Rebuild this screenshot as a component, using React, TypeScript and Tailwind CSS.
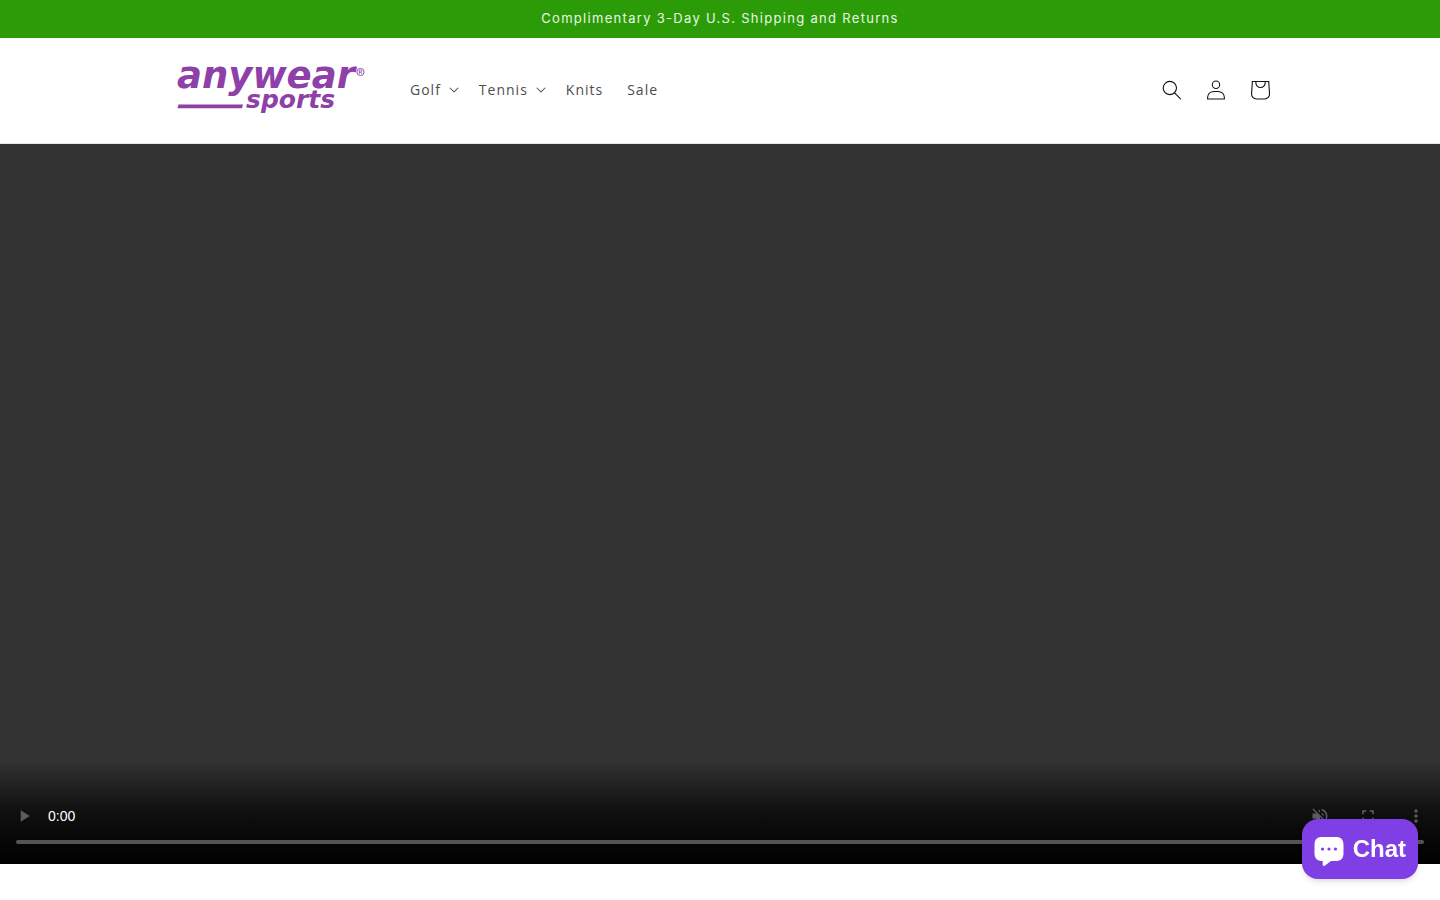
import React from 'react';

const CaretIcon = () => (
  <svg viewBox="0 0 10 6" fill="currentColor" className="w-2.5 h-1.5" aria-hidden="true">
    <path d="M9.354.646a.5.5 0 00-.708 0L5 4.293 1.354.646a.5.5 0 00-.708.708l4 4a.5.5 0 00.708 0l4-4a.5.5 0 000-.708z" />
  </svg>
);

const Logo = () => (
  <svg viewBox="0 -4 204 73" className="w-[204px] h-[73px]" fill="#8e3fa8" fontFamily="'DejaVu Sans', sans-serif" fontWeight="700" fontStyle="italic">
    <text>
      <tspan x="7" y="31" fontSize="37">anywear</tspan>
      <tspan x="76" y="51" fontSize="25">sports</tspan>
    </text>
    <path d="M8.500 47.500h64.500l-1 3.700H7.500z" />
    <circle cx="190.500" cy="15" r="3.600" fill="none" stroke="#8e3fa8" strokeWidth="0.900" />
    <path d="M189.300 17v-4h1.400a1.100 1.100 0 010 2.200h-1.400m1.400 0l1.200 1.800" fill="none" stroke="#8e3fa8" strokeWidth="0.800" />
  </svg>
);

const navItems = [
  { name: 'Golf', hasMenu: true },
  { name: 'Tennis', hasMenu: true },
  { name: 'Knits', hasMenu: false },
  { name: 'Sale', hasMenu: false },
];

const headerActions = [
  {
    name: 'Search',
    viewBox: '0 0 18 19',
    size: 'w-5 h-5',
    path: 'M11.03 11.68A5.784 5.784 0 112.85 3.5a5.784 5.784 0 018.18 8.18zm.26 1.12a6.78 6.78 0 11.72-.7l5.4 5.4a.5.5 0 11-.71.7l-5.41-5.4z',
  },
  {
    name: 'Log in',
    viewBox: '0 0 18 19',
    size: 'w-5 h-5',
    path: 'M6 4.5a3 3 0 116 0 3 3 0 01-6 0zm3-4a4 4 0 100 8 4 4 0 000-8zm5.58 12.15c1.12.82 1.83 2.24 1.91 4.85H1.51c.08-2.6.79-4.03 1.9-4.85C4.66 11.75 6.5 11.5 9 11.5s4.35.26 5.58 1.15zM9 10.5c-2.5 0-4.65.24-6.17 1.35C1.27 12.98.5 14.93.5 18v.5h17V18c0-3.07-.77-5.02-2.33-6.15-1.52-1.1-3.67-1.35-6.17-1.35z',
  },
  {
    name: 'Cart',
    viewBox: '0 0 40 40',
    size: 'w-11 h-11',
    path: 'M15.75 11.8h-3.16l-.77 11.6a5 5 0 0 0 4.99 5.34h7.38a5 5 0 0 0 4.99-5.33L28.4 11.8zm0 1h-2.22l-.71 10.67a4 4 0 0 0 3.99 4.27h7.38a4 4 0 0 0 4-4.27l-.72-10.67h-2.22v.63a4.75 4.75 0 1 1-9.5 0zm8.5 0h-7.5v.63a3.75 3.75 0 1 0 7.5 0z',
  },
];

const playPath = 'M8 5v14l11-7z';

const playerActions = [
  {
    name: 'Unmute',
    path: 'M16.5 12c0-1.77-1.02-3.29-2.5-4.03v2.21l2.45 2.45c.03-.2.05-.41.05-.63zm2.5 0c0 .94-.2 1.82-.54 2.64l1.51 1.51C20.63 14.91 21 13.5 21 12c0-4.28-2.99-7.86-7-8.77v2.06c2.89.86 5 3.54 5 6.71zM4.27 3L3 4.27 7.73 9H3v6h4l5 5v-6.73l4.25 4.25c-.67.52-1.42.93-2.25 1.18v2.06c1.38-.31 2.63-.95 3.69-1.81L19.73 21 21 19.73l-9-9L4.27 3zM12 4L9.91 6.09 12 8.18V4z',
  },
  {
    name: 'Full screen',
    path: 'M7 14H5v5h5v-2H7v-3zm-2-4h2V7h3V5H5v5zm12 7h-3v2h5v-5h-2v3zM14 5v2h3v3h2V5h-5z',
  },
  {
    name: 'More options',
    path: 'M12 8c1.1 0 2-.9 2-2s-.9-2-2-2-2 .9-2 2 .9 2 2 2zm0 2c-1.1 0-2 .9-2 2s.9 2 2 2 2-.9 2-2-.9-2-2-2zm0 6c-1.1 0-2 .9-2 2s.9 2 2 2 2-.9 2-2-.9-2-2-2z',
  },
];

const PlayerButton = ({ name, path }: { name: string; path: string }) => (
  <button type="button" aria-label={name} disabled className="w-12 h-12 flex items-center justify-center text-[#5c5c5c]">
    <svg viewBox="0 0 24 24" fill="currentColor" className="w-5 h-5">
      <path d={path} />
    </svg>
  </button>
);

const Header = () => (
  <header className="border-b border-gray-200 bg-white">
    <div className="max-w-[1200px] mx-auto pl-[50px] pr-[38px] pt-[15px] pb-[17px] flex items-center">
      <a href="#" aria-label="Anywear Sports" className="mr-6">
        <Logo />
      </a>
      <nav className="flex-1 flex items-center font-['Open_Sans',sans-serif] text-sm tracking-[1px] text-[#4d4d4d]">
        {navItems.map((item) =>
          item.hasMenu ? (
            <button key={item.name} type="button" className="pl-3 pr-2 py-3 flex items-center gap-2">
              {item.name}
              <CaretIcon />
            </button>
          ) : (
            <a key={item.name} href="#" className="px-3 py-3">
              {item.name}
            </a>
          )
        )}
      </nav>
      <div className="flex items-center text-[#121212]">
        {headerActions.map((action) => (
          <a key={action.name} href="#" aria-label={action.name} className="w-11 h-11 flex items-center justify-center">
            <svg viewBox={action.viewBox} fill="currentColor" fillRule="evenodd" className={action.size}>
              <path d={action.path} />
            </svg>
          </a>
        ))}
      </div>
    </div>
  </header>
);

const VideoPlayer = () => (
  <section aria-label="Video" className="aspect-[2/1] bg-[#333] flex flex-col justify-end">
    <div className="pt-8 pb-5 bg-linear-to-b from-transparent via-black/70 to-black">
      <div className="flex items-center">
        <PlayerButton name="Play" path={playPath} />
        <span className="flex-1 text-sm text-white font-['Liberation_Sans',sans-serif]">0:00</span>
        {playerActions.map((action) => (
          <PlayerButton key={action.name} name={action.name} path={action.path} />
        ))}
      </div>
      <div className="px-4 flex">
        <input
          type="range"
          aria-label="Video position"
          min={0}
          max={100}
          defaultValue={0}
          disabled
          className="w-full h-1 rounded-full appearance-none bg-[#545454] [&::-webkit-slider-thumb]:appearance-none"
        />
      </div>
    </div>
  </section>
);

const ChatButton = () => (
  <button
    type="button"
    className="fixed right-[22px] bottom-[21px] h-[60px] px-3 flex items-center gap-[9px] rounded-2xl bg-[#7f3fe4] text-white shadow-md font-['Liberation_Sans',sans-serif] text-2xl font-bold"
  >
    <svg viewBox="0 0 30 34" className="w-[30px] h-[34px]" aria-hidden="true">
      <path
        fill="currentColor"
        d="M8 5h13.500c5.500 0 8 2.500 8 8v8c0 5.500-2.500 8-8 8H17l-6.300 4.700c-.9.700-2 .2-2-.9V29C3 29 .5 26.500.5 21v-8C.5 7.500 3 5 8 5z"
      />
      <g fill="#7f3fe4">
        <circle cx="8.500" cy="17" r="1.600" />
        <circle cx="15" cy="17" r="1.600" />
        <circle cx="21.500" cy="17" r="1.600" />
      </g>
    </svg>
    Chat
  </button>
);

export default function App() {
  return (
    <div className="min-h-screen bg-white">
      <div className="bg-[#2b9c08] text-white/90 text-center text-[13px] leading-5 tracking-widest pt-2 pb-2.5 font-['Inter',sans-serif]">
        Complimentary 3-Day U.S. Shipping and Returns
      </div>
      <Header />
      <main>
        <VideoPlayer />
      </main>
      <ChatButton />
    </div>
  );
}
